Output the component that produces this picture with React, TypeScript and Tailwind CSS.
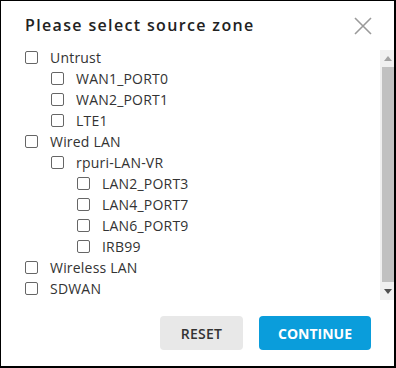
import React from "react";

type Item = { label: string; level: number };

const items: Item[] = [
  { label: "Untrust", level: 0 },
  { label: "WAN1_PORT0", level: 1 },
  { label: "WAN2_PORT1", level: 1 },
  { label: "LTE1", level: 1 },
  { label: "Wired LAN", level: 0 },
  { label: "rpuri-LAN-VR", level: 1 },
  { label: "LAN2_PORT3", level: 2 },
  { label: "LAN4_PORT7", level: 2 },
  { label: "LAN6_PORT9", level: 2 },
  { label: "IRB99", level: 2 },
  { label: "Wireless LAN", level: 0 },
  { label: "SDWAN", level: 0 },
];

const indent = ["pl-0", "pl-[26px]", "pl-[52px]"];

export default function App() {
  return (
    <div
      className="w-[396px] h-[368px] bg-white border-black border-t border-l border-r-2 border-b-2 flex flex-col text-[#333]"
      style={{ fontFamily: '"Open Sans", "Liberation Sans", sans-serif' }}
    >
      <div className="flex items-start justify-between pl-[24px] pr-[22px] pt-[13px] h-[46px]">
        <div className="text-[16px] font-semibold text-[#222] leading-[22px] tracking-[1.35px]">
          Please select source zone
        </div>
        <svg width="18" height="18" viewBox="0 0 18 18" className="mt-[3px]">
          <path d="M1 1 L17 17 M17 1 L1 17" stroke="#9a9a9a" strokeWidth="1.6" fill="none" />
        </svg>
      </div>
      <div className="flex h-[254px]">
        <div className="flex-1 flex flex-col pl-[24px]">
          {items.map((it) => (
            <div key={it.label} className={`flex items-center h-[21px] ${indent[it.level]}`}>
              <span className="w-[13px] h-[13px] border border-[#666] rounded-[2px] bg-white shrink-0" />
              <span className="ml-[12px] text-[14px] leading-none tracking-[0.2px]">{it.label}</span>
            </div>
          ))}
        </div>
        <div className="w-[14px] mt-[3px] h-[250px] bg-[#f0f0f0] flex flex-col">
          <div className="h-[17px] flex items-center justify-center pl-[2px]">
            <svg width="8" height="5" viewBox="0 0 8 5">
              <path d="M0 5 L4 0 L8 5 Z" fill="#a3a3a3" />
            </svg>
          </div>
          <div className="flex-1 ml-[2px] bg-[#c1c1c1]" />
          <div className="h-[18px] flex items-center justify-center pl-[2px]">
            <svg width="8" height="5" viewBox="0 0 8 5">
              <path d="M0 0 L8 0 L4 5 Z" fill="#505050" />
            </svg>
          </div>
        </div>
      </div>
      <div className="flex justify-end gap-[16px] pr-[23px] mt-[15px]">
        <button className="w-[83px] h-[34px] rounded-[4px] bg-[#e8e8e8] text-[#333] text-[14px] font-semibold tracking-[0.3px]">
          RESET
        </button>
        <button className="w-[112px] h-[34px] rounded-[4px] bg-[#0a9ddb] text-white text-[14px] font-bold">
          CONTINUE
        </button>
      </div>
    </div>
  );
}
